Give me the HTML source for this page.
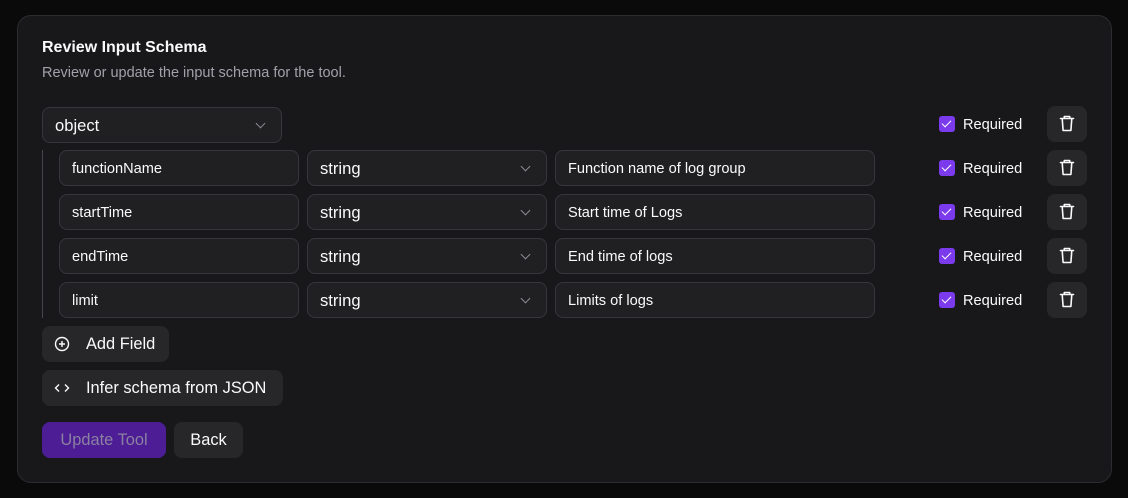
<!DOCTYPE html>
<html><head><style>
*{box-sizing:border-box;margin:0;padding:0}
body{width:1128px;height:498px;background:#0a0a0b;font-family:"Liberation Sans",sans-serif;color:#fafafa;position:relative;overflow:hidden}
.card{position:absolute;left:17px;top:15px;width:1095px;height:468px;background:#18181b;border:1px solid #2c2c30;border-radius:14px}
.a{position:absolute}
.t{left:42px;top:39px;font-size:16px;font-weight:bold}
.s{left:42px;top:65px;font-size:14.5px;color:#a1a1aa}
.in{position:absolute;height:36px;border:1px solid #36363b;border-radius:8px;background:#202023;font-size:14.6px;padding-left:12px;line-height:36px}
.sel{font-size:16.6px}
.chev{position:absolute;right:17px;top:12px;width:7px;height:7px;border-right:1.5px solid #8a8a90;border-bottom:1.5px solid #8a8a90;transform:rotate(45deg)}
.cb{position:absolute;width:16px;height:16px;background:#7c3aed;border-radius:3px}
.cb:after{content:"";position:absolute;left:5px;top:2px;width:4px;height:8px;border-right:1.6px solid #fff;border-bottom:1.6px solid #fff;transform:rotate(45deg)}
.req{position:absolute;font-size:14.6px}
.tr{position:absolute;width:40px;height:36px;background:#27272a;border-radius:8px}
.btn{position:absolute;height:36px;background:#27272a;border-radius:8px;font-size:16.4px;line-height:36px}
.line{left:42px;top:150px;width:1px;height:168px;background:#44444a}
</style></head><body>
<div class="card"></div>
<div class="a t">Review Input Schema</div>
<div class="a s">Review or update the input schema for the tool.</div>
<div class="in sel" style="left:42px;top:107px;width:240px">object<span class="chev"></span></div>
<div class="a line"></div>

<div class="in" style="left:59px;top:150px;width:240px">functionName</div>
<div class="in sel" style="left:307px;top:150px;width:240px">string<span class="chev"></span></div>
<div class="in" style="left:555px;top:150px;width:320px">Function name of log group</div>

<div class="in" style="left:59px;top:194px;width:240px">startTime</div>
<div class="in sel" style="left:307px;top:194px;width:240px">string<span class="chev"></span></div>
<div class="in" style="left:555px;top:194px;width:320px">Start time of Logs</div>

<div class="in" style="left:59px;top:238px;width:240px">endTime</div>
<div class="in sel" style="left:307px;top:238px;width:240px">string<span class="chev"></span></div>
<div class="in" style="left:555px;top:238px;width:320px">End time of logs</div>

<div class="in" style="left:59px;top:282px;width:240px">limit</div>
<div class="in sel" style="left:307px;top:282px;width:240px">string<span class="chev"></span></div>
<div class="in" style="left:555px;top:282px;width:320px">Limits of logs</div>

<div id="rq"></div>
<script>
var h='';[106,150,194,238,282].forEach(function(y){
h+='<div class="cb" style="left:939px;top:'+(y+10)+'px"></div><div class="req" style="left:963px;top:'+(y+11)+'px">Required</div>';
h+='<div class="tr" style="left:1047px;top:'+y+'px"><svg width="40" height="36" viewBox="0 0 40 36" fill="none" stroke="#fafafa" stroke-width="1.6" stroke-linecap="round" stroke-linejoin="round"><path d="M13.5 12.5h13M17.3 12.5v-2h5.4v2M15.2 12.5l.9 12h7.8l.9-12"/></svg></div>';
});document.getElementById('rq').innerHTML=h;
</script>

<div class="btn" style="left:42px;top:326px;width:127px;padding-left:44px">Add Field
<svg class="a" style="left:12px;top:10px" width="16" height="16" viewBox="0 0 16 16" fill="none" stroke="#fafafa" stroke-width="1.4"><circle cx="8" cy="8" r="6.5"/><path d="M8 5v6M5 8h6"/></svg></div>
<div class="btn" style="left:42px;top:370px;width:241px;padding-left:44px">Infer schema from JSON
<svg class="a" style="left:12px;top:10px" width="16" height="16" viewBox="0 0 16 16" fill="none" stroke="#fafafa" stroke-width="1.4"><path d="M5 4.5L1.5 8 5 11.5M11 4.5L14.5 8 11 11.5"/></svg></div>
<div class="btn" style="left:42px;top:422px;width:124px;background:#4c1d95;color:#8b80a0;text-align:center">Update Tool</div>
<div class="btn" style="left:174px;top:422px;width:69px;text-align:center">Back</div>
</body></html>
